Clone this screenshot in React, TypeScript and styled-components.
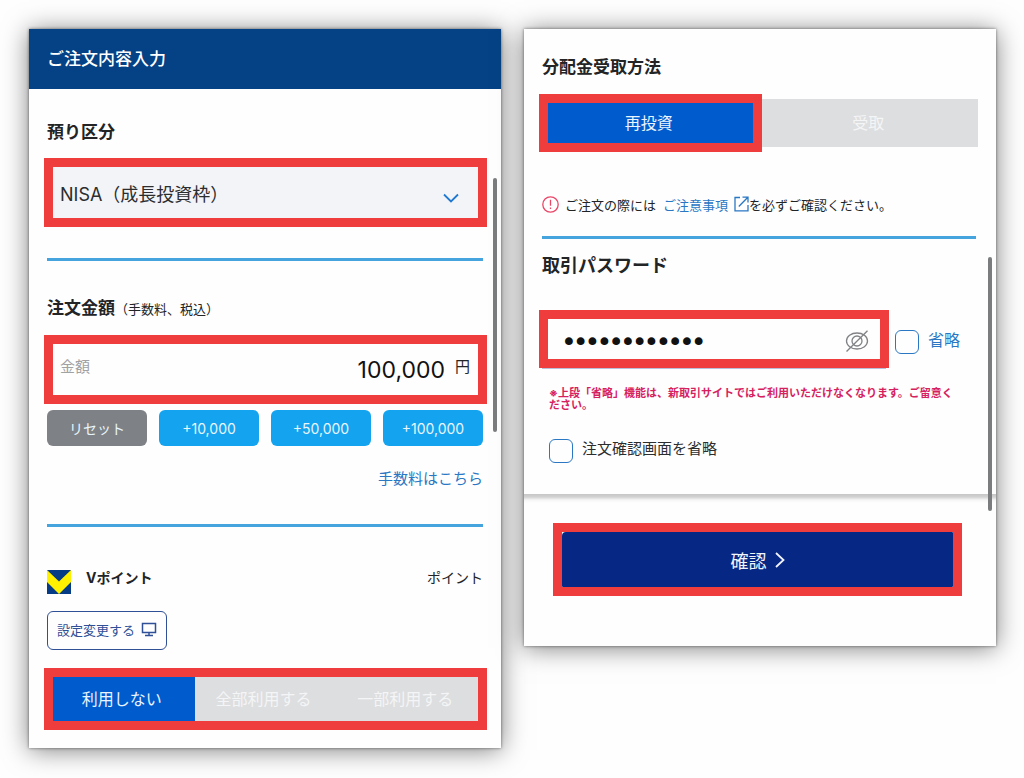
import React, { useState } from "react";
import styled, { createGlobalStyle } from "styled-components";

const GlobalStyle = createGlobalStyle`
  *, *::before, *::after { box-sizing: border-box; }
  body {
    margin: 0;
    background: #fefefe;
    color: #222426;
    font-family: Inter, "Noto Sans CJK JP", sans-serif;
  }
  button, input, select { font-family: inherit; margin: 0; }
  h1, h2, p { margin: 0; }
`;

const Page = styled.main`
  display: grid;
  grid-template-columns: 1fr 1fr;
  align-items: start;
  gap: 23px;
  padding: 29px 28px 30px 29px;
`;

const Panel = styled.section`
  position: relative;
  min-width: 0;
  background: #fefefe;
  box-shadow: 0 0 3px rgba(0, 0, 0, 0.5), 0 2px 24px rgba(0, 0, 0, 0.5);
`;

const TitleBar = styled.header`
  display: flex;
  align-items: center;
  height: 60px;
  padding: 0 18px;
  background: #054285;
  color: #fff;
`;

const Title = styled.h1`
  font-size: 17px;
  line-height: 24px;
  font-weight: 500;
`;

const Body = styled.div<{ $top: number; $right: number; $bottom: number }>`
  display: flex;
  flex-direction: column;
  padding: ${(p) => p.$top}px ${(p) => p.$right}px ${(p) => p.$bottom}px 15px;
`;

const Inset = styled.div<{ $top?: number; $right?: number }>`
  display: flex;
  flex-direction: column;
  padding: 0 ${(p) => p.$right ?? 4}px 0 3px;
  margin-top: ${(p) => p.$top ?? 0}px;
`;

const Heading = styled.h2<{ $size?: number }>`
  font-size: ${(p) => p.$size ?? 17}px;
  line-height: 24px;
  font-weight: 700;
`;

const Small = styled.span`
  font-size: 13px;
  font-weight: 400;
`;

const Divider = styled.hr`
  width: 100%;
  height: 3px;
  margin: 0;
  border: 0;
  background: #45a3dd;
`;

const Frame = styled.div<{ $top?: number; $height: number }>`
  display: flex;
  position: relative;
  min-width: 0;
  height: ${(p) => p.$height}px;
  margin-top: ${(p) => p.$top ?? 0}px;
  border: 9px solid #ef3c3c;
`;

const Select = styled.select`
  flex: 1;
  min-width: 0;
  appearance: none;
  border: 0;
  border-radius: 0;
  padding: 4px 44px 0 7px;
  background: #f3f4f7;
  color: #2b2d2f;
  font-size: 18px;
`;

const SelectArrow = styled.svg`
  position: absolute;
  right: 18px;
  bottom: 13px;
  pointer-events: none;
`;

const AmountField = styled.div`
  display: flex;
  flex: 1;
  align-items: center;
  min-width: 0;
  padding: 0 8px 0 7px;
`;

const AmountLabel = styled.label`
  color: #a0a1a3;
  font-size: 15px;
  line-height: 24px;
  padding-bottom: 6px;
`;

const AmountInput = styled.input`
  flex: 1;
  min-width: 0;
  border: 0;
  padding: 0;
  background: none;
  color: #111;
  font-size: 23px;
  line-height: 32px;
  text-align: right;
`;

const Unit = styled.span`
  padding: 0 0 6px 10px;
  font-size: 15px;
  line-height: 24px;
`;

const QuickRow = styled.div`
  display: grid;
  grid-template-columns: repeat(4, 1fr);
  gap: 12px;
`;

const QuickButton = styled.button<{ $muted?: boolean }>`
  height: 36px;
  padding: 0;
  border: 0;
  border-radius: 6px;
  background: ${(p) => (p.$muted ? "#7e8287" : "#14a3ee")};
  color: #e9f5fc;
  font-size: 14px;
`;

const FeeLink = styled.a`
  align-self: flex-end;
  margin: 23px 0 35px;
  color: #2a77c4;
  font-size: 15px;
  line-height: 20px;
  text-decoration: none;
`;

const PointRow = styled.div`
  display: flex;
  align-items: flex-start;
  gap: 15px;
  font-size: 14px;
  line-height: 16px;
`;

const PointName = styled.strong`
  flex: 1;
  font-weight: 700;
`;

const SettingButton = styled.button`
  display: flex;
  align-items: center;
  justify-content: center;
  gap: 6px;
  align-self: flex-start;
  width: 120px;
  height: 39px;
  margin-top: 17px;
  padding: 0 0 2px;
  border: 1px solid #2f4f96;
  border-radius: 6px;
  background: #fefefe;
  color: #2f4f96;
  font-size: 13px;
`;

const Segment = styled.button<{ $on: boolean }>`
  flex: 1 1 0;
  min-width: 0;
  padding: 0 4px 2px 0;
  border: 0;
  background: ${(p) => (p.$on ? "#005ccd" : "#dddee0")};
  color: ${(p) => (p.$on ? "#eaf4ff" : "#f4f5f6")};
  font-size: 16px;
`;

const Scrollbar = styled.div<{ $top: number; $height: number }>`
  position: absolute;
  top: ${(p) => p.$top}px;
  right: 4px;
  width: 4px;
  height: ${(p) => p.$height}px;
  border-radius: 2px;
  background: #7b7c7e;
`;

const PayoutRow = styled.div`
  display: grid;
  grid-template-columns: 28fr 27fr;
  align-items: center;
  margin-top: 15px;
`;

const PayoutOther = styled.div`
  display: flex;
  height: 48px;
`;

const Notice = styled.p`
  display: flex;
  align-items: center;
  height: 22px;
  margin: 41px 0 21px;
  font-size: 13px;
  white-space: nowrap;
`;

const NoticeText = styled.span`
  padding: 0 7px 0 6px;
`;

const NoticeLink = styled.a`
  display: flex;
  align-items: center;
  gap: 6px;
  color: #2a77c4;
  text-decoration: none;
`;

const PasswordRow = styled.div`
  display: grid;
  grid-template-columns: 1fr 83px;
  gap: 6px;
  margin-top: 32px;
`;

const PasswordField = styled(Frame)`
  align-items: center;
  box-shadow: 0 4px 0 -3px #b9bfd6;
`;

const PasswordInput = styled.input`
  flex: 1;
  min-width: 0;
  border: 0;
  padding: 4px 0 0 15px;
  background: none;
  color: #111;
  font-family: "DejaVu Sans", sans-serif;
  font-size: 20px;
  -webkit-text-stroke: 2px #111;
`;

const EyeButton = styled.button`
  display: flex;
  align-items: center;
  padding: 4px 11px 0 0;
  border: 0;
  background: none;
`;

const CheckLabel = styled.label<{ $size: number; $blue?: boolean }>`
  display: flex;
  align-items: center;
  gap: 9px;
  padding-top: ${(p) => (p.$blue ? 6 : 0)}px;
  color: ${(p) => (p.$blue ? "#2a77c4" : "#2b2d2f")};
  font-size: ${(p) => p.$size}px;
  line-height: 20px;
  white-space: nowrap;

  span { padding-bottom: 4px; }
`;

const Checkbox = styled.input`
  appearance: none;
  flex: none;
  width: 24px;
  height: 24px;
  border: 1px solid #2a77c4;
  border-radius: 6px;
  background: #fefefe;
  &:checked { background: #2a77c4; }
`;

const Warning = styled.p`
  margin: 19px 0 28px;
  color: #d6215f;
  font-size: 11px;
  line-height: 12px;
  font-weight: 700;
`;

const FormNotes = styled.div`
  padding: 0 16px 0 10px;
`;

const Footer = styled.footer`
  padding: 29px 34px 50px 29px;
  background: linear-gradient(#c6c6c6, #d2d2d2 3px, #f6f6f6 6px, #fefefe 9px);
`;

const ConfirmFrame = styled(Frame)`
  background: #fefefe;
`;

const ConfirmButton = styled.button`
  display: flex;
  flex: 1;
  align-items: center;
  justify-content: center;
  gap: 8px;
  padding: 0;
  border: 0;
  border-radius: 4px 1px 1px 1px;
  background: #062784;
  color: #f1f4fb;
  font-size: 18px;
`;

const VPointLogo = () => (
  <svg width="24" height="24" viewBox="0 0 24 24" aria-hidden="true">
    <rect width="24" height="24" fill="#063b85" />
    <path d="M0 0 12 11.500 24 0V12L12 24 0 12Z" fill="#fff100" />
  </svg>
);

const MonitorIcon = () => (
  <svg width="16" height="15" viewBox="0 0 16 15" fill="none" stroke="currentColor" strokeWidth="1.500" aria-hidden="true">
    <path d="M1.500 1.500h13v9h-13zM8 10.500v3M4 13.500h8" />
  </svg>
);

const AlertIcon = () => (
  <svg width="17" height="17" viewBox="0 0 17 17" fill="none" stroke="#ea4668" strokeWidth="1.300" aria-hidden="true">
    <circle cx="8.500" cy="8.500" r="7.700" />
    <path d="M8.500 3.800v6M8.500 11.600v1.500" />
  </svg>
);

const ExternalIcon = () => (
  <svg width="15" height="16" viewBox="0 0 15 16" fill="none" stroke="currentColor" strokeWidth="1.300" aria-hidden="true">
    <path d="M6 1.500H1v13.300h13V9M4.800 10.500 13.600 1.500M8.500 1.200H14V6.500" />
  </svg>
);

const HiddenEyeIcon = () => (
  <svg width="24" height="22" viewBox="0 0 24 22" fill="none" stroke="#808285" strokeWidth="1.300" aria-hidden="true">
    <ellipse cx="12" cy="11" rx="10.500" ry="8" />
    <circle cx="12" cy="11" r="5" />
    <path d="M1.500 21.500 22.500 .7" />
  </svg>
);

const usageOptions = ["利用しない", "全部利用する", "一部利用する"];

export default function App() {
  const [usage, setUsage] = useState(0);
  const [payout, setPayout] = useState(0);
  const [amount, setAmount] = useState(100000);

  return (
    <>
      <GlobalStyle />
      <Page>
        <Panel>
          <TitleBar>
            <Title>ご注文内容入力</Title>
          </TitleBar>
          <Body $top={31} $right={14} $bottom={18}>
            <Inset>
              <Heading>預り区分</Heading>
            </Inset>
            <Frame $top={14} $height={69}>
              <Select aria-label="預り区分">
                <option>NISA（成長投資枠）</option>
              </Select>
              <SelectArrow width="18" height="14" viewBox="0 0 18 14" fill="none" stroke="#1f78d1" strokeWidth="1.800">
                <path d="M2 3.500 9 10.500 16 3.500" />
              </SelectArrow>
            </Frame>
            <Inset $top={31}>
              <Divider />
            </Inset>
            <Inset $top={35}>
              <Heading>
                注文金額<Small>（手数料、税込）</Small>
              </Heading>
            </Inset>
            <Frame $top={14} $height={69}>
              <AmountField>
                <AmountLabel htmlFor="amount">金額</AmountLabel>
                <AmountInput
                  id="amount"
                  inputMode="numeric"
                  value={amount.toLocaleString("en-US")}
                  onChange={(e) => setAmount(Number(e.target.value.replace(/\D/g, "")))}
                />
                <Unit>円</Unit>
              </AmountField>
            </Frame>
            <Inset $top={6}>
              <QuickRow>
                <QuickButton type="button" $muted onClick={() => setAmount(0)}>リセット</QuickButton>
                {[10000, 50000, 100000].map((n) => (
                  <QuickButton key={n} type="button" onClick={() => setAmount(amount + n)}>
                    {`+${n.toLocaleString("en-US")}`}
                  </QuickButton>
                ))}
              </QuickRow>
              <FeeLink href="#fee">手数料はこちら</FeeLink>
              <Divider />
            </Inset>
            <Inset $top={43}>
              <PointRow>
                <VPointLogo />
                <PointName>Vポイント</PointName>
                <span>ポイント</span>
              </PointRow>
              <SettingButton type="button">
                設定変更する
                <MonitorIcon />
              </SettingButton>
            </Inset>
            <Frame $top={18} $height={62}>
              {usageOptions.map((label, i) => (
                <Segment key={label} type="button" $on={usage === i} aria-pressed={usage === i} onClick={() => setUsage(i)}>
                  {label}
                </Segment>
              ))}
            </Frame>
          </Body>
          <Scrollbar $top={149} $height={254} />
        </Panel>

        <Panel>
          <Body $top={26} $right={18} $bottom={31}>
            <Inset>
              <Heading>分配金受取方法</Heading>
            </Inset>
            <PayoutRow>
              <Frame $height={58}>
                <Segment type="button" $on={payout === 0} aria-pressed={payout === 0} onClick={() => setPayout(0)}>再投資</Segment>
              </Frame>
              <PayoutOther>
                <Segment type="button" $on={payout === 1} aria-pressed={payout === 1} onClick={() => setPayout(1)}>受取</Segment>
              </PayoutOther>
            </PayoutRow>
            <Inset $right={2}>
              <Notice>
                <AlertIcon />
                <NoticeText>ご注文の際には</NoticeText>
                <NoticeLink href="#notes">
                  ご注意事項
                  <ExternalIcon />
                </NoticeLink>
                を必ずご確認ください。
              </Notice>
              <Divider />
            </Inset>
            <Inset $top={15}>
              <Heading $size={18}>取引パスワード</Heading>
            </Inset>
            <PasswordRow>
              <PasswordField $height={58}>
                <PasswordInput type="password" aria-label="取引パスワード" defaultValue="abcdefghijkl" />
                <EyeButton type="button" aria-label="パスワードを表示">
                  <HiddenEyeIcon />
                </EyeButton>
              </PasswordField>
              <CheckLabel $size={16} $blue>
                <Checkbox type="checkbox" />
                <span>省略</span>
              </CheckLabel>
            </PasswordRow>
            <FormNotes>
              <Warning>
                ※上段「省略」機能は、新取引サイトではご利用いただけなくなります。ご留意ください。
              </Warning>
              <CheckLabel $size={15}>
                <Checkbox type="checkbox" />
                <span>注文確認画面を省略</span>
              </CheckLabel>
            </FormNotes>
          </Body>
          <Footer>
            <ConfirmFrame $height={73}>
              <ConfirmButton type="button">
                確認
                <svg width="10" height="16" viewBox="0 0 10 16" fill="none" stroke="currentColor" strokeWidth="1.800" aria-hidden="true">
                  <path d="M1 1 8.500 8 1 15" />
                </svg>
              </ConfirmButton>
            </ConfirmFrame>
          </Footer>
          <Scrollbar $top={228} $height={254} />
        </Panel>
      </Page>
    </>
  );
}
